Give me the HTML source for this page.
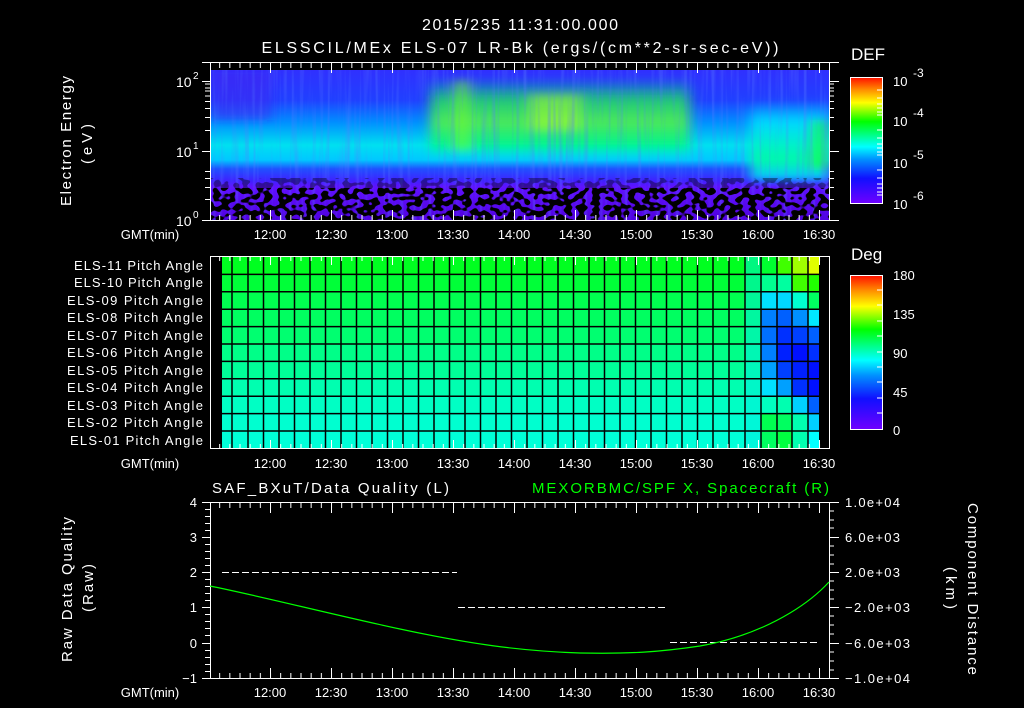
<!DOCTYPE html>
<html><head><meta charset="utf-8"><style>
html,body{margin:0;padding:0;background:#000;width:1024px;height:708px;overflow:hidden}
svg{display:block}
text{font-family:"Liberation Sans",sans-serif;fill:#fff;font-size:13px}
</style></head><body>
<svg width="1024" height="708" viewBox="0 0 1024 708" xmlns="http://www.w3.org/2000/svg">
<defs>
<linearGradient id="defbar" x1="0" y1="1" x2="0" y2="0">
<stop offset="0" stop-color="#7000ff"/><stop offset="0.2" stop-color="#1010ff"/><stop offset="0.35" stop-color="#0090ff"/><stop offset="0.45" stop-color="#00ffff"/><stop offset="0.65" stop-color="#00ff00"/><stop offset="0.8" stop-color="#ffff00"/><stop offset="0.9" stop-color="#ff9000"/><stop offset="1" stop-color="#ff1000"/>
</linearGradient>
<linearGradient id="specV" x1="0" y1="70" x2="0" y2="220" gradientUnits="userSpaceOnUse">
<stop offset="0" stop-color="#3030ff"/><stop offset="0.2" stop-color="#2040ff"/><stop offset="0.35" stop-color="#0090ff"/><stop offset="0.5" stop-color="#00e0f0"/><stop offset="0.6" stop-color="#00c8ff"/><stop offset="0.66" stop-color="#2050ff"/><stop offset="0.74" stop-color="#4020ff"/><stop offset="0.78" stop-color="#6010ff"/><stop offset="1" stop-color="#5000e0"/>
</linearGradient>
<linearGradient id="greenV" x1="0" y1="70" x2="0" y2="220" gradientUnits="userSpaceOnUse">
<stop offset="0.05" stop-color="#00ff60" stop-opacity="0"/><stop offset="0.2" stop-color="#20ff40" stop-opacity="0.7"/><stop offset="0.35" stop-color="#60ff30" stop-opacity="0.8"/><stop offset="0.5" stop-color="#00ff60" stop-opacity="0.7"/><stop offset="0.6" stop-color="#00ffc0" stop-opacity="0"/>
</linearGradient>
<linearGradient id="rightV" x1="0" y1="70" x2="0" y2="220" gradientUnits="userSpaceOnUse">
<stop offset="0.2" stop-color="#00c0ff" stop-opacity="0"/><stop offset="0.35" stop-color="#00e0ff" stop-opacity="0.9"/><stop offset="0.6" stop-color="#00ffa0" stop-opacity="0.9"/><stop offset="0.72" stop-color="#00e0ff" stop-opacity="0.9"/><stop offset="0.76" stop-color="#2040ff" stop-opacity="0"/>
</linearGradient>
<filter id="blur" x="0" y="0" width="1" height="1"><feGaussianBlur stdDeviation="6 4"/></filter>
<filter id="speck" x="0" y="0" width="1" height="1">
<feTurbulence type="fractalNoise" baseFrequency="0.14 0.18" numOctaves="1" seed="4" result="n"/>
<feColorMatrix in="n" type="matrix" values="0 0 0 0 0  0 0 0 0 0  0 0 0 0 0  0 0 0 -20 10.6"/>
</filter>
<filter id="streak" x="0" y="0" width="1" height="1">
<feTurbulence type="fractalNoise" baseFrequency="0.25 0.01" numOctaves="2" seed="9" result="n"/>
<feColorMatrix in="n" type="matrix" values="0 0 0 0 0.1  0 0 0 0 0.2  0 0 0 0 1  0 0 0 -3 1.6"/>
</filter>
<clipPath id="c1"><rect x="211" y="70" width="618" height="150"/></clipPath>
<pattern id="tmin" x="270" y="0" width="10.1667" height="708" patternUnits="userSpaceOnUse"><rect x="0" y="0" width="1" height="708" fill="#fff"/></pattern>
<pattern id="tmaj" x="270" y="0" width="61" height="708" patternUnits="userSpaceOnUse"><rect x="0" y="0" width="1" height="708" fill="#fff"/></pattern>
</defs>

<text x="520" y="30" text-anchor="middle" style="font-size:16px" textLength="196">2015/235 11:31:00.000</text>
<text x="520" y="53" text-anchor="middle" style="font-size:16px" textLength="517">ELSSCIL/MEx ELS-07 LR-Bk  (ergs/(cm**2-sr-sec-eV))</text>

<g clip-path="url(#c1)">
<rect x="211" y="70" width="618" height="150" fill="url(#specV)"/>
<g filter="url(#blur)">
<rect x="211" y="70" width="60" height="50" fill="#4020f0" opacity="0.5"/>
<rect x="430" y="70" width="260" height="150" fill="url(#greenV)"/>
<rect x="455" y="80" width="14" height="70" fill="#80ff20" opacity="0.5"/>
<rect x="530" y="95" width="50" height="35" fill="#c0ff20" opacity="0.45"/>
<rect x="750" y="70" width="79" height="150" fill="url(#rightV)"/>
<rect x="810" y="120" width="19" height="50" fill="#20ff20" opacity="0.5"/>
</g>
<rect x="211" y="70" width="618" height="150" filter="url(#streak)" opacity="0.35"/>
<rect x="211" y="178" width="618" height="12" fill="#000" filter="url(#speck)" opacity="0.4"/>
<rect x="211" y="188" width="618" height="32" fill="#000" filter="url(#speck)"/>
</g>
<path d="M202 62.5H839M202 220.5H839M210.5 62V221M829.5 62V221" stroke="#fff" stroke-width="1" fill="none"/>
<rect x="211" y="63" width="618" height="5" fill="url(#tmin)"/>
<rect x="211" y="63" width="618" height="10" fill="url(#tmaj)"/>
<rect x="211" y="215" width="618" height="5" fill="url(#tmin)"/>
<rect x="211" y="210" width="618" height="10" fill="url(#tmaj)"/>
<path d="M202 220.5h8M202 151.5h8M202 81.5h8M205 199.5h5M205 187.5h5M205 178.5h5M205 171.5h5M205 130.5h5M205 117.5h5M205 108.5h5M205 101.5h5M205 96h5M205 91h5M205 88h5M205 84h5
M829 151.5h10M829 81.5h10M829 199.5h5M829 187.5h5M829 178.5h5M829 171.5h5M829 130.5h5M829 117.5h5M829 108.5h5M829 101.5h5M829 96h5M829 91h5M829 88h5M829 84h5" stroke="#fff" fill="none"/>
<text x="176" y="226" style="font-size:14px">10</text><text x="193" y="218" style="font-size:10px">0</text>
<text x="176" y="157" style="font-size:14px">10</text><text x="193" y="149" style="font-size:10px">1</text>
<text x="176" y="87" style="font-size:14px">10</text><text x="193" y="79" style="font-size:10px">2</text>
<text transform="translate(71,206) rotate(-90)" style="font-size:15px" textLength="130">Electron Energy</text>
<text transform="translate(92,164) rotate(-90)" style="font-size:15px" textLength="40">(eV)</text>
<g style="font-size:14px" text-anchor="middle">
<text x="150" y="239">GMT(min)</text>
<text x="270" y="239">12:00</text><text x="331" y="239">12:30</text><text x="392" y="239">13:00</text><text x="453" y="239">13:30</text><text x="514" y="239">14:00</text><text x="575" y="239">14:30</text><text x="636" y="239">15:00</text><text x="697" y="239">15:30</text><text x="758" y="239">16:00</text><text x="819" y="239">16:30</text>
</g>
<text x="851" y="60" style="font-size:17px">DEF</text>
<rect x="850.5" y="77.5" width="32" height="126" fill="url(#defbar)" stroke="#fff"/>
<path d="M877 90h5M877 98h5M877 104h5M877 108h5M877 112h5M877 115h5M877 130h5M877 138h5M877 144h5M877 148h5M877 152h5M877 155h5M877 170h5M877 178h5M877 184h5M877 188h5M877 192h5M877 195h5" stroke="#fff"/>
<g style="font-size:17px"><text x="893" y="86">10</text><text x="913" y="77" style="font-size:12px">-3</text>
<text x="893" y="126">10</text><text x="913" y="117" style="font-size:12px">-4</text>
<text x="893" y="168">10</text><text x="913" y="159" style="font-size:12px">-5</text>
<text x="893" y="209">10</text><text x="913" y="200" style="font-size:12px">-6</text></g>

<g>
<rect x="222" y="257" width="597" height="17.4" fill="#00ff20"/>
<rect x="222" y="274.4" width="597" height="17.4" fill="#00ff38"/>
<rect x="222" y="291.8" width="597" height="17.4" fill="#00ff50"/>
<rect x="222" y="309.2" width="597" height="17.4" fill="#00ff60"/>
<rect x="222" y="326.6" width="597" height="17.4" fill="#00ff70"/>
<rect x="222" y="344" width="597" height="17.4" fill="#00ff88"/>
<rect x="222" y="361.4" width="597" height="17.4" fill="#00ff98"/>
<rect x="222" y="378.8" width="597" height="17.4" fill="#00ffb0"/>
<rect x="222" y="396.2" width="597" height="17.4" fill="#00ffc4"/>
<rect x="222" y="413.6" width="597" height="17.4" fill="#00ffd0"/>
<rect x="222" y="431" width="597" height="17.4" fill="#00ffd8"/>
</g>
<g>
<rect x="745" y="257" width="16" height="191" fill="#00f0e0" opacity="0.5"/>
<rect x="761" y="257" width="16" height="17.4" fill="#00ff30"/><rect x="777" y="257" width="15" height="17.4" fill="#40ff00"/><rect x="792" y="257" width="16" height="17.4" fill="#a0ff00"/><rect x="808" y="257" width="11" height="17.4" fill="#e0ff00"/>
<rect x="761" y="274.4" width="16" height="17.4" fill="#00ff90"/><rect x="777" y="274.4" width="15" height="17.4" fill="#00ffa0"/><rect x="792" y="274.4" width="16" height="17.4" fill="#40ff00"/><rect x="808" y="274.4" width="11" height="17.4" fill="#20ff00"/>
<rect x="761" y="291.8" width="16" height="17.4" fill="#00e0ff"/><rect x="777" y="291.8" width="15" height="17.4" fill="#00d8ff"/><rect x="792" y="291.8" width="16" height="17.4" fill="#00ffd0"/><rect x="808" y="291.8" width="11" height="17.4" fill="#00ff60"/>
<rect x="761" y="309.2" width="16" height="17.4" fill="#0080ff"/><rect x="777" y="309.2" width="15" height="17.4" fill="#0060ff"/><rect x="792" y="309.2" width="16" height="17.4" fill="#0090ff"/><rect x="808" y="309.2" width="11" height="17.4" fill="#00e8ff"/>
<rect x="761" y="326.6" width="16" height="17.4" fill="#0070ff"/><rect x="777" y="326.6" width="15" height="17.4" fill="#0030ff"/><rect x="792" y="326.6" width="16" height="17.4" fill="#0040ff"/><rect x="808" y="326.6" width="11" height="17.4" fill="#0060ff"/>
<rect x="761" y="344" width="16" height="17.4" fill="#0080ff"/><rect x="777" y="344" width="15" height="17.4" fill="#0020ff"/><rect x="792" y="344" width="16" height="17.4" fill="#0010ff"/><rect x="808" y="344" width="11" height="17.4" fill="#0030ff"/>
<rect x="761" y="361.4" width="16" height="17.4" fill="#00a0ff"/><rect x="777" y="361.4" width="15" height="17.4" fill="#0040ff"/><rect x="792" y="361.4" width="16" height="17.4" fill="#0020ff"/><rect x="808" y="361.4" width="11" height="17.4" fill="#0010ff"/>
<rect x="761" y="378.8" width="16" height="17.4" fill="#00e0ff"/><rect x="777" y="378.8" width="15" height="17.4" fill="#00a0ff"/><rect x="792" y="378.8" width="16" height="17.4" fill="#0030ff"/><rect x="808" y="378.8" width="11" height="17.4" fill="#0010ff"/>
<rect x="761" y="396.2" width="16" height="17.4" fill="#00ffc0"/><rect x="777" y="396.2" width="15" height="17.4" fill="#00ffb0"/><rect x="792" y="396.2" width="16" height="17.4" fill="#00d0ff"/><rect x="808" y="396.2" width="11" height="17.4" fill="#0060ff"/>
<rect x="761" y="413.6" width="16" height="17.4" fill="#00ff50"/><rect x="777" y="413.6" width="15" height="17.4" fill="#00ff60"/><rect x="792" y="413.6" width="16" height="17.4" fill="#00ffb0"/><rect x="808" y="413.6" width="11" height="17.4" fill="#00d0ff"/>
<rect x="761" y="431" width="16" height="17.4" fill="#00ff60"/><rect x="777" y="431" width="15" height="17.4" fill="#00ff40"/><rect x="792" y="431" width="16" height="17.4" fill="#00ffb0"/><rect x="808" y="431" width="11" height="17.4" fill="#00ffff"/>
</g>
<path stroke="#000" stroke-width="1.5" fill="none" d="M222 274.4H819M222 291.8H819M222 309.2H819M222 326.6H819M222 344H819M222 361.4H819M222 378.8H819M222 396.2H819M222 413.6H819M222 431H819
M232 257V448M248 257V448M263.5 257V448M279 257V448M294.5 257V448M310 257V448M325.5 257V448M341 257V448M356.5 257V448M372 257V448M387.5 257V448M403 257V448M418.5 257V448M434 257V448M449.5 257V448M465 257V448M480.5 257V448M496 257V448M511.5 257V448M527 257V448M542.5 257V448M558 257V448M573.5 257V448M589 257V448M604.5 257V448M620 257V448M635.5 257V448M651 257V448M666.5 257V448M682 257V448M697.5 257V448M713 257V448M729 257V448M745 257V448M761 257V448M777 257V448M792 257V448M808 257V448"/>
<path d="M210.5 256V449M829.5 256V449M210 256.5H830M210 448.5H830" stroke="#fff" fill="none"/>
<rect x="211" y="257" width="618" height="4" fill="url(#tmin)"/>
<rect x="211" y="257" width="618" height="8" fill="url(#tmaj)"/>
<rect x="211" y="444" width="618" height="4" fill="url(#tmin)"/>
<rect x="211" y="440" width="618" height="8" fill="url(#tmaj)"/>
<g text-anchor="end" style="font-size:14px">
<text x="203" y="270" textLength="129">ELS-11 Pitch Angle</text>
<text x="203" y="287" textLength="129">ELS-10 Pitch Angle</text>
<text x="203" y="305" textLength="136">ELS-09 Pitch Angle</text>
<text x="203" y="322" textLength="136">ELS-08 Pitch Angle</text>
<text x="203" y="340" textLength="136">ELS-07 Pitch Angle</text>
<text x="203" y="357" textLength="136">ELS-06 Pitch Angle</text>
<text x="203" y="375" textLength="136">ELS-05 Pitch Angle</text>
<text x="203" y="392" textLength="136">ELS-04 Pitch Angle</text>
<text x="203" y="410" textLength="136">ELS-03 Pitch Angle</text>
<text x="203" y="427" textLength="136">ELS-02 Pitch Angle</text>
<text x="203" y="445" textLength="133">ELS-01 Pitch Angle</text>
</g>
<g style="font-size:14px" text-anchor="middle">
<text x="150" y="468">GMT(min)</text>
<text x="270" y="468">12:00</text><text x="331" y="468">12:30</text><text x="392" y="468">13:00</text><text x="453" y="468">13:30</text><text x="514" y="468">14:00</text><text x="575" y="468">14:30</text><text x="636" y="468">15:00</text><text x="697" y="468">15:30</text><text x="758" y="468">16:00</text><text x="819" y="468">16:30</text>
</g>
<text x="851" y="260" style="font-size:17px">Deg</text>
<rect x="850.5" y="275.5" width="32" height="154" fill="url(#defbar)" stroke="#fff"/>
<path d="M877 290h5M877 305h5M877 321h5M877 336h5M877 352h5M877 367h5M877 382h5M877 398h5M877 413h5" stroke="#fff"/>
<g style="font-size:17px"><text x="893" y="280">180</text><text x="893" y="319">135</text><text x="893" y="358">90</text><text x="893" y="397">45</text><text x="893" y="435">0</text></g>

<text x="212" y="493" style="font-size:15px" textLength="237">SAF_BXuT/Data Quality (L)</text>
<text x="829" y="493" text-anchor="end" style="font-size:15px;fill:#00ff00" textLength="297">MEXORBMC/SPF X, Spacecraft (R)</text>
<path d="M210.5 502V679M829.5 502V679M202 502.5H839M202 678.5H839" stroke="#fff" fill="none"/>
<rect x="211" y="503" width="618" height="5" fill="url(#tmin)"/>
<rect x="211" y="503" width="618" height="10" fill="url(#tmaj)"/>
<rect x="211" y="673" width="618" height="5" fill="url(#tmin)"/>
<rect x="211" y="668" width="618" height="10" fill="url(#tmaj)"/>
<path stroke="#fff" fill="none" d="M202 537.5h8M202 572.5h8M202 607.5h8M202 643.5h8M205 509.5h5M205 516.5h5M205 523.5h5M205 530.5h5M205 544.5h5M205 551.5h5M205 558.5h5M205 565.5h5M205 579.5h5M205 586.5h5M205 593.5h5M205 600.5h5M205 614.5h5M205 621.5h5M205 628.5h5M205 635.5h5M205 650.5h5M205 657.5h5M205 664.5h5M205 671.5h5
M829 537.5h10M829 572.5h10M829 607.5h10M829 643.5h10M829 511h5M829 520h5M829 528h5M829 546h5M829 555h5M829 564h5M829 581h5M829 590h5M829 599h5M829 616h5M829 625h5M829 634h5M829 652h5M829 661h5M829 670h5"/>
<g style="font-size:14px" text-anchor="end"><text x="197" y="507">4</text><text x="197" y="542">3</text><text x="197" y="577">2</text><text x="197" y="612">1</text><text x="197" y="648">0</text><text x="197" y="683">−1</text></g>
<g style="font-size:14px"><text x="845" y="507" textLength="55">1.0e+04</text><text x="845" y="542" textLength="55">6.0e+03</text><text x="845" y="577" textLength="55">2.0e+03</text><text x="845" y="612" textLength="65">−2.0e+03</text><text x="845" y="648" textLength="65">−6.0e+03</text><text x="845" y="683" textLength="65">−1.0e+04</text></g>
<text transform="translate(72,662) rotate(-90)" style="font-size:15px" textLength="145">Raw Data Quality</text>
<text transform="translate(93,612) rotate(-90)" style="font-size:15px" textLength="48">(Raw)</text>
<text transform="translate(968,503) rotate(90)" style="font-size:15px" textLength="172">Component Distance</text>
<text transform="translate(946,567) rotate(90)" style="font-size:15px" textLength="42">(km)</text>
<path d="M222 572.5H457M458 607.5H668M670 642.5H819" stroke="#fff" stroke-dasharray="7,3" fill="none"/>
<path d="M210 586 C260 596 330 614 400 629 C470 644 520 651 580 653 C630 654 660 652 700 646 C740 639 770 625 790 613 C805 604 818 594 829 582" stroke="#00ff00" stroke-width="1.2" fill="none"/>
<g style="font-size:14px" text-anchor="middle">
<text x="150" y="697">GMT(min)</text>
<text x="270" y="697">12:00</text><text x="331" y="697">12:30</text><text x="392" y="697">13:00</text><text x="453" y="697">13:30</text><text x="514" y="697">14:00</text><text x="575" y="697">14:30</text><text x="636" y="697">15:00</text><text x="697" y="697">15:30</text><text x="758" y="697">16:00</text><text x="819" y="697">16:30</text>
</g>
</svg>
</body></html>
